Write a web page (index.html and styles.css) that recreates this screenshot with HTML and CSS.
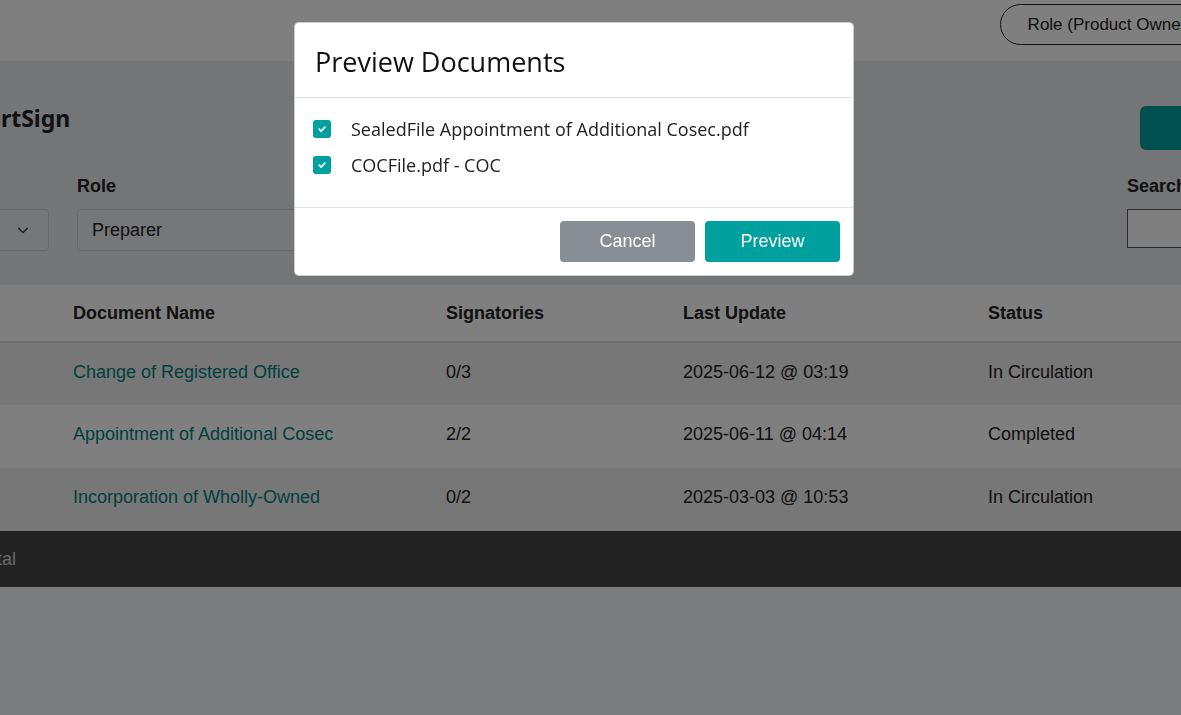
FILE: index.html
```html
<!DOCTYPE html>
<html lang="en">
<head>
    <meta charset="UTF-8">
    <meta name="viewport" content="width=device-width, initial-scale=1.0">
    <title>SmartSign - Documents</title>
    <link rel="stylesheet" href="styles.css">
</head>
<body>
    <header class="topbar">
        <button class="role-pill">Role (Product Owner)</button>
    </header>

    <main class="main">
        <div class="title-row">
            <h1 class="brand">SmartSign</h1>
            <button class="btn-new">New Document</button>
        </div>

        <div class="filters">
            <div class="field">
                <label>Company</label>
                <div class="select">
                    <span>All</span>
                    <svg width="14" height="14" viewBox="0 0 16 16"><path d="M3 6l5 5 5-5" fill="none" stroke="#333" stroke-width="1.6" stroke-linecap="round" stroke-linejoin="round"/></svg>
                </div>
            </div>
            <div class="field">
                <label>Role</label>
                <div class="select">
                    <span>Preparer</span>
                </div>
            </div>
            <div class="field">
                <label>Status</label>
                <div class="select">
                    <span>All</span>
                </div>
            </div>
            <div class="field field-search">
                <label>Search</label>
                <div class="search"></div>
            </div>
        </div>

        <table class="doc-table">
            <colgroup>
                <col class="c-company">
                <col class="c-name">
                <col class="c-sign">
                <col class="c-date">
                <col class="c-status">
            </colgroup>
            <thead>
                <tr>
                    <th>Company</th>
                    <th>Document Name</th>
                    <th>Signatories</th>
                    <th>Last Update</th>
                    <th>Status</th>
                </tr>
            </thead>
            <tbody>
                <tr>
                    <td>Acme Holdings</td>
                    <td><a href="#">Change of Registered Office</a></td>
                    <td>0/3</td>
                    <td>2025-06-12 @ 03:19</td>
                    <td>In Circulation</td>
                </tr>
                <tr>
                    <td>Acme Holdings</td>
                    <td><a href="#">Appointment of Additional Cosec</a></td>
                    <td>2/2</td>
                    <td>2025-06-11 @ 04:14</td>
                    <td>Completed</td>
                </tr>
                <tr>
                    <td>Acme Holdings</td>
                    <td><a href="#">Incorporation of Wholly-Owned</a></td>
                    <td>0/2</td>
                    <td>2025-03-03 @ 10:53</td>
                    <td>In Circulation</td>
                </tr>
            </tbody>
        </table>
    </main>

    <footer class="footer">
        <div class="footer-text">SmartSign Portal</div>
    </footer>

    <div class="backdrop"></div>

    <div class="modal">
        <div class="modal-header">
            <h2>Preview Documents</h2>
        </div>
        <div class="modal-body">
            <label class="check-row">
                <span class="checkbox">
                    <svg width="10" height="10" viewBox="0 0 10 10"><path d="M2.2 5.2l1.9 1.9 3.8-4" fill="none" stroke="#fff" stroke-width="1.7" stroke-linecap="round" stroke-linejoin="round"/></svg>
                </span>
                <span>SealedFile Appointment of Additional Cosec.pdf</span>
            </label>
            <label class="check-row">
                <span class="checkbox">
                    <svg width="10" height="10" viewBox="0 0 10 10"><path d="M2.2 5.2l1.9 1.9 3.8-4" fill="none" stroke="#fff" stroke-width="1.7" stroke-linecap="round" stroke-linejoin="round"/></svg>
                </span>
                <span>COCFile.pdf - COC</span>
            </label>
        </div>
        <div class="modal-footer">
            <button class="btn btn-cancel">Cancel</button>
            <button class="btn btn-preview">Preview</button>
        </div>
    </div>
</body>
</html>
```

FILE: styles.css
```css
body {
    margin: 0;
    padding: 0;
    background-color: #f6f8fc;
    font-family: 'Liberation Sans', Arial, sans-serif;
    color: #222;
    overflow: hidden;
    height: 100vh;
}

/* top bar */
.topbar {
    height: 61px;
    background: #fff;
    display: flex;
    justify-content: flex-end;
    align-items: flex-start;
    overflow: hidden;
}

.role-pill {
    margin-top: 4px;
    margin-right: -39px;
    height: 41px;
    padding: 0 27px;
    border: 1px solid #222;
    border-radius: 21px;
    background: #fff;
    font-family: 'Liberation Sans', Arial, sans-serif;
    font-size: 17px;
    color: #222;
}

/* main content */
.main {
    background: #e8eaee;
    height: 470px;
    overflow: hidden;
}

.title-row {
    display: flex;
    justify-content: space-between;
    align-items: flex-start;
    padding-top: 44px;
    height: 44px;
}

.brand {
    margin: 0 0 0 -48px;
    font-family: 'Noto Sans', sans-serif;
    font-size: 23px;
    font-weight: 700;
    line-height: 26px;
    color: #222;
}

.btn-new {
    margin-top: 1px;
    margin-right: -160px;
    width: 201px;
    height: 44px;
    border: none;
    border-radius: 6px;
    background: #00a09e;
    color: #fff;
    font-size: 17px;
}

.filters {
    display: grid;
    grid-template-columns: repeat(5, 322px);
    gap: 28px;
    margin-left: -273px;
    margin-top: 27px;
}

.field-search {
    grid-column: 5;
}

.field label {
    display: block;
    font-size: 18px;
    font-weight: 700;
    line-height: 20px;
    margin-bottom: 13px;
}

.select {
    height: 40px;
    border: 1px solid #d0d3d8;
    border-radius: 4px;
    background: #eceef1;
    display: flex;
    align-items: center;
    justify-content: space-between;
    padding: 0 18px 0 14px;
    font-size: 18px;
    color: #222;
}

.search {
    height: 37px;
    border: 1px solid #555;
    background: #fff;
}

/* table */
.doc-table {
    margin-top: 34px;
    margin-left: -143px;
    border-collapse: collapse;
    table-layout: fixed;
    width: 1500px;
    font-size: 18px;
    background: #fff;
}

.c-company { width: 200px; }
.c-name { width: 373px; }
.c-sign { width: 237px; }
.c-date { width: 305px; }
.c-status { width: 385px; }

.doc-table th {
    text-align: left;
    height: 56px;
    padding: 0 16px;
    font-weight: 700;
    border-bottom: 2px solid #dcdcdc;
}

.doc-table td {
    height: 58px;
    padding: 0 16px 4px;
    white-space: nowrap;
}

.doc-table tbody tr:nth-child(odd) {
    background: #eeeeee;
}

.doc-table tbody tr:nth-child(2) td {
    height: 59px;
}

.doc-table a {
    color: #00807e;
    text-decoration: none;
}

/* footer */
.footer {
    height: 56px;
    background: #444;
    display: flex;
    align-items: center;
}

.footer-text {
    width: 200px;
    margin-left: -184px;
    text-align: right;
    color: #d2d2d2;
    font-size: 18px;
}

/* modal */
.backdrop {
    position: fixed;
    inset: 0;
    background: rgba(0, 0, 0, 0.5);
}

.modal {
    position: fixed;
    left: 294px;
    top: 22px;
    width: 558px;
    background: #fff;
    border: 1px solid rgba(0, 0, 0, 0.2);
    border-radius: 5px;
    font-family: 'Open Sans', sans-serif;
    color: #222;
}

.modal-header {
    height: 74px;
    padding: 0 20px;
    border-bottom: 1px solid #dee2e6;
    display: flex;
    align-items: center;
}

.modal-header h2 {
    margin: 2px 0 0;
    font-size: 27px;
    font-weight: 400;
    color: #111;
}

.modal-body {
    padding: 13px 18px 17px;
    height: 79px;
}

.check-row {
    display: flex;
    align-items: center;
    height: 36px;
    font-size: 18px;
}

.checkbox {
    width: 18px;
    height: 18px;
    border-radius: 3px;
    background: #00a09f;
    display: flex;
    align-items: center;
    justify-content: center;
    margin-right: 20px;
}

.modal-footer {
    border-top: 1px solid #dee2e6;
    display: flex;
    justify-content: flex-end;
    gap: 10px;
    padding: 13px 13px 13px;
}

.btn {
    width: 135px;
    height: 41px;
    border: none;
    border-radius: 4px;
    color: #fff;
    font-family: 'Liberation Sans', Arial, sans-serif;
    font-size: 18px;
}

.btn-cancel {
    background: #878e96;
}

.btn-preview {
    background: #00a09f;
}
```
